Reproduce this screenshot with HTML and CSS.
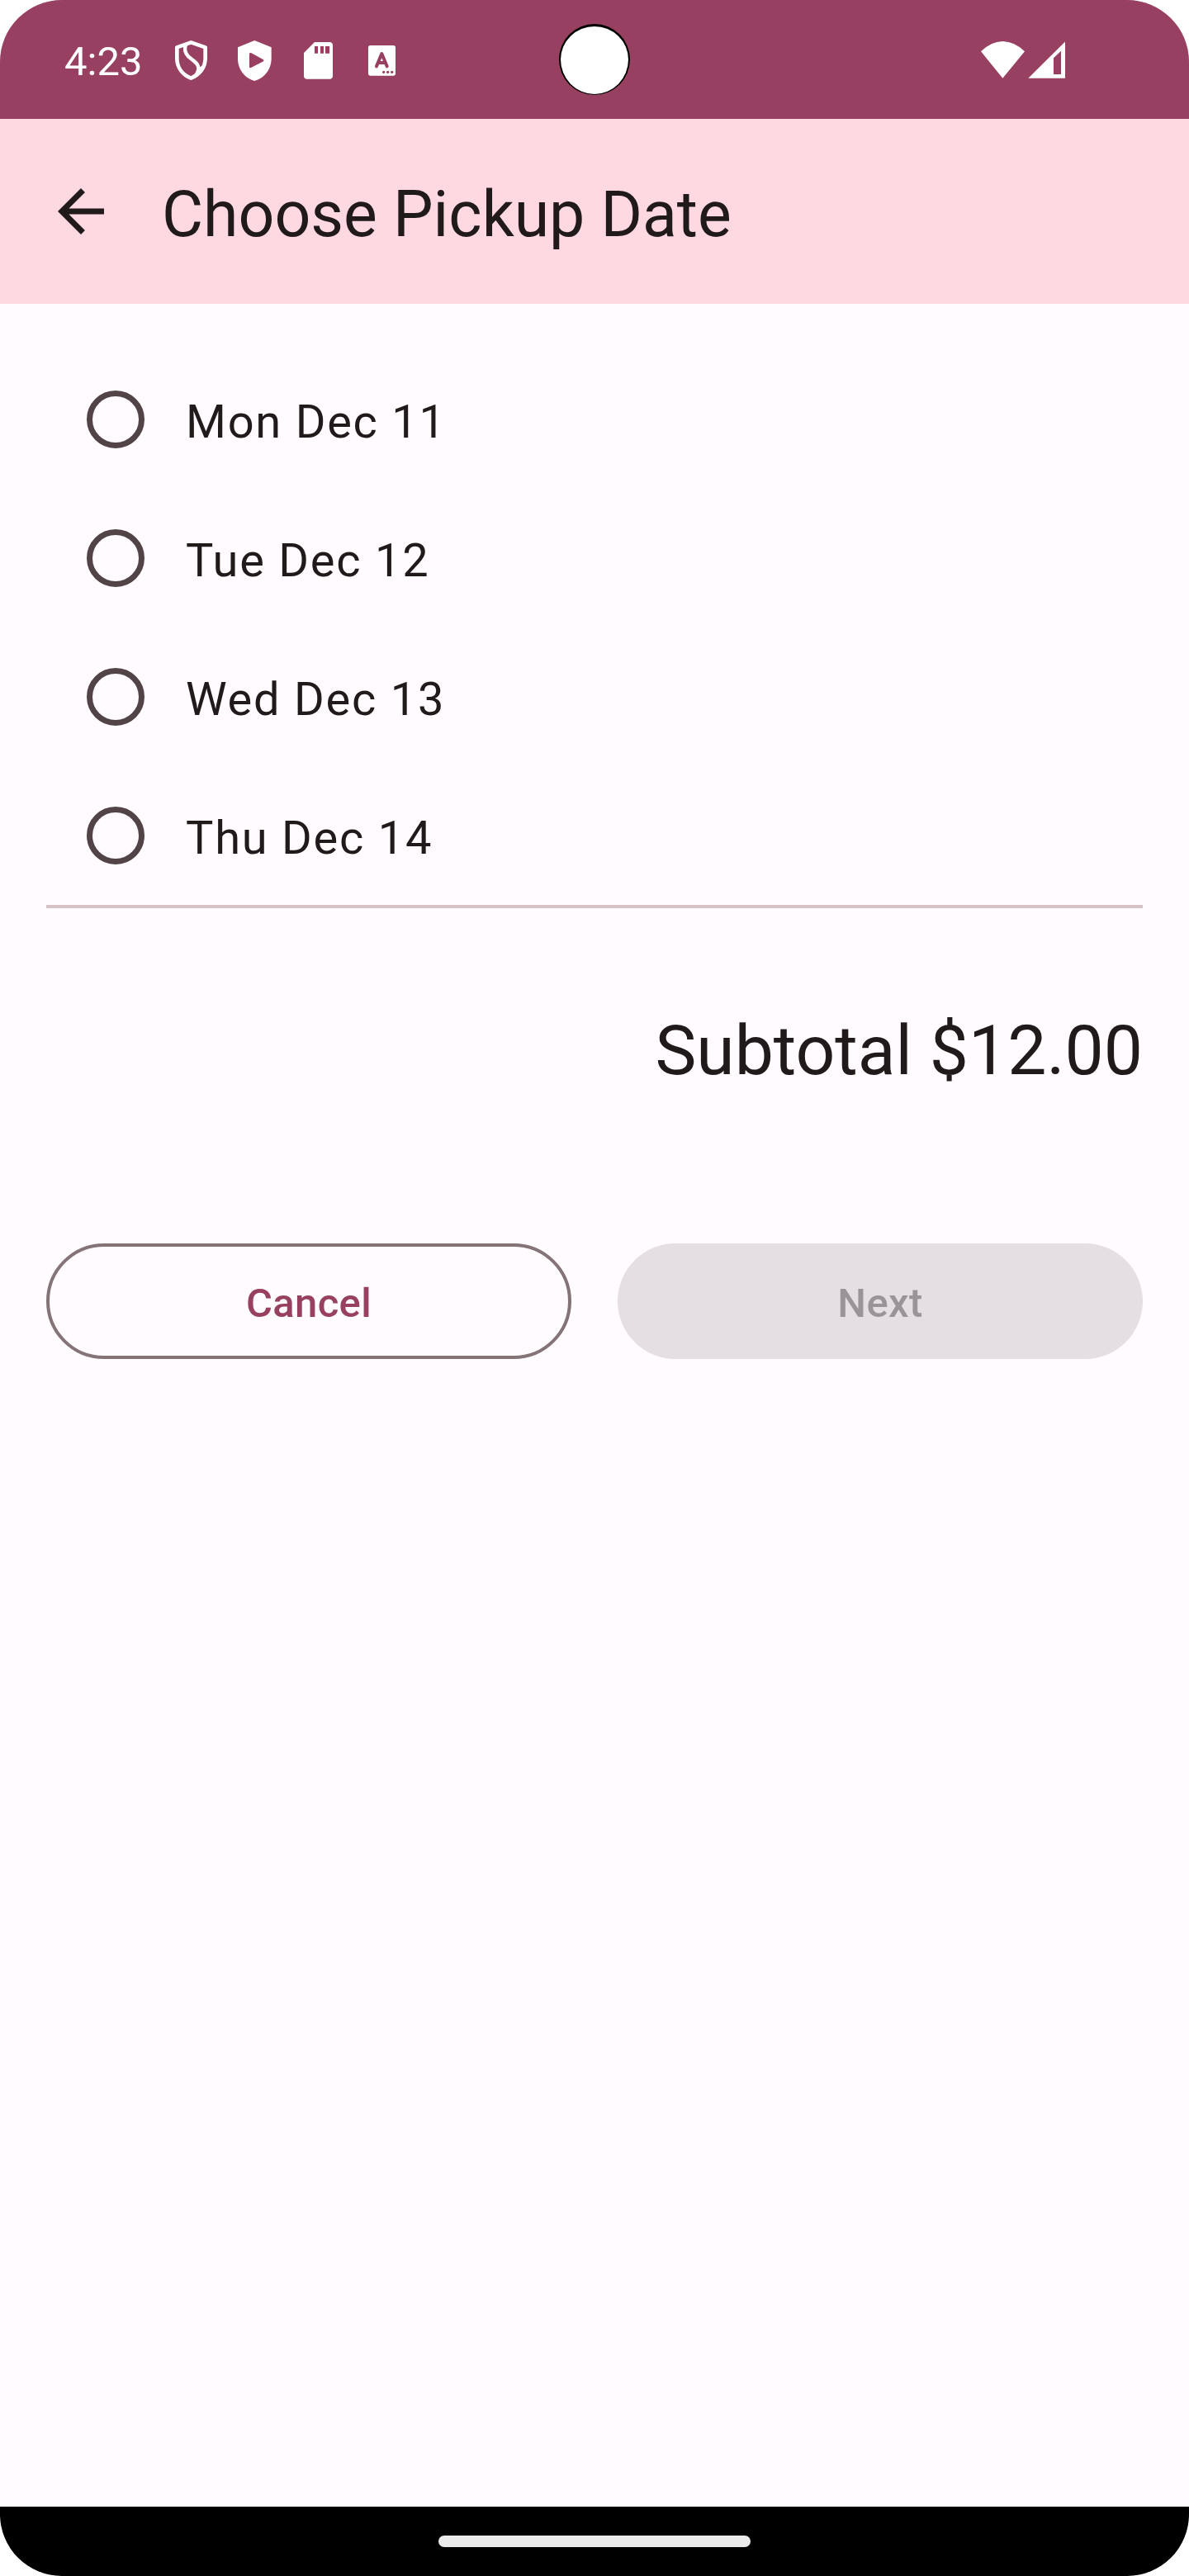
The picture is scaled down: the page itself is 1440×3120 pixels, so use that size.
FILE: index.html
```html
<!DOCTYPE html>
<html lang="en">
<head>
<meta charset="utf-8">
<title>Choose Pickup Date</title>
<link rel="stylesheet" href="styles.css">
</head>
<body>
<div class="device">
  <header class="status-bar">
    <span class="clock">4:23</span>
    <div class="notifications">
      <svg class="note-icon" viewBox="580 120 231 192" aria-hidden="true">
        <g fill="none" stroke="#fff" stroke-width="14" stroke-linejoin="round">
          <path d="M695 154L644 172V212C644 247 666 272 695 284C724 272 747 247 747 212V172Z"/>
          <path d="M676 163C669 181 673 193 686 206L706 222C726 238 727 253 711 276" stroke-width="13"/>
        </g>
        <path d="M727 244L738 237L727 262Z" fill="#fff"/>
      </svg>
      <svg class="note-icon" viewBox="810 120 231 192" aria-hidden="true">
        <path fill="#fff" fill-rule="evenodd" d="M925 147L986 172V213C986 254 958 285 925 294C892 285 864 254 864 213V172ZM906 196V243Q907 248 912 246L957 223Q960 220 957 217L912 192Q907 191 906 196Z"/>
      </svg>
      <svg class="note-icon" viewBox="1041 120 231 192" aria-hidden="true">
        <path fill="#fff" fill-rule="evenodd" d="M1143 153H1198Q1209 154 1209 165V275Q1209 286 1198 287H1115Q1104 286 1104 275V192ZM1143 168V194H1155V168ZM1164 168V194H1176V168ZM1182 168V194H1197V168Z"/>
      </svg>
      <svg class="note-icon" viewBox="1272 120 231 192" aria-hidden="true">
        <rect x="1338" y="165" width="99" height="110" rx="8" fill="#fff"/>
        <path d="M1368 241L1387 195L1406 241M1375 228H1399" fill="none" stroke="#984061" stroke-width="12" stroke-linecap="round" stroke-linejoin="round"/>
        <g fill="#984061"><circle cx="1394" cy="262" r="5"/><circle cx="1409" cy="262" r="5"/><circle cx="1424" cy="262" r="5"/></g>
      </svg>
    </div>
    <svg class="network" viewBox="138 120 315 192" aria-hidden="true">
      <path fill="#fff" d="M144 187Q180 151 223 150Q267 151 303 187L223 284Z"/>
      <path fill="#fff" fill-rule="evenodd" d="M316 284.500L450 151.500V284.500ZM408 211V270H435V185Z"/>
    </svg>
    <span class="camera"></span>
  </header>
  <div class="app-bar">
    <svg class="back" viewBox="0 0 24 24" role="img" aria-label="Back"><path d="M20 11H7.830l5.590-5.590L12 4l-8 8 8 8 1.410-1.410L7.830 13H20z"/></svg>
    <h1 class="title">Choose Pickup Date</h1>
  </div>
  <main class="content">
    <div class="options">
      <label class="option"><input class="radio" type="radio" name="date"><span class="label">Mon Dec 11</span></label>
      <label class="option"><input class="radio" type="radio" name="date"><span class="label">Tue Dec 12</span></label>
      <label class="option"><input class="radio" type="radio" name="date"><span class="label">Wed Dec 13</span></label>
      <label class="option"><input class="radio" type="radio" name="date"><span class="label">Thu Dec 14</span></label>
    </div>
    <p class="subtotal">Subtotal $12.00</p>
    <div class="actions">
      <button class="button outlined" type="button">Cancel</button>
      <button class="button filled" type="button" disabled>Next</button>
    </div>
  </main>
  <footer class="nav-bar"><span class="handle"></span></footer>
</div>
</body>
</html>
```
FILE: styles.css
```css
* {
  box-sizing: border-box;
}

body {
  margin: 0;
  background: #fff;
  font-family: Roboto, sans-serif;
  color: #201a1b;
}

.device {
  display: flex;
  flex-direction: column;
  width: 1440px;
  height: 3120px;
  border-radius: 75px;
  overflow: hidden;
  background: #fffbff;
}

.status-bar {
  position: relative;
  display: flex;
  align-items: center;
  flex: none;
  height: 144px;
  padding: 0 149px 0 78px;
  background: #984061;
}

.clock {
  width: 115.300px;
  padding-top: 5px;
  font-size: 49px;
  line-height: 58px;
  color: #fff;
}

.notifications {
  display: flex;
}

.note-icon {
  display: block;
  width: 77px;
  height: 64px;
}

.network {
  width: 105px;
  height: 64px;
  margin-left: auto;
}

/* Front camera cut-out, laid over the status bar */
.camera {
  position: absolute;
  left: 677px;
  top: 29px;
  width: 86px;
  height: 86px;
  border: solid #000;
  border-width: 3px 2px 1px;
  border-radius: 50%;
  background: #fff;
}

.app-bar {
  display: flex;
  align-items: center;
  flex: none;
  gap: 56px;
  height: 224px;
  padding: 0 56px;
  background: #ffd9e1;
}

.back {
  width: 84px;
  height: 84px;
  fill: #201a1b;
}

.title {
  margin: 0;
  padding-top: 7px;
  font-size: 77px;
  font-weight: 400;
  line-height: 98px;
}

.content {
  flex: 1;
  padding: 56px;
}

.options {
  border-bottom: 4px solid #d6c2c6;
}

.option {
  display: flex;
  align-items: center;
  gap: 50px;
  height: 168px;
  padding-left: 49px;
}

.radio {
  appearance: none;
  width: 70px;
  height: 70px;
  margin: 0;
  border: 7px solid #524347;
  border-radius: 50%;
}

.label {
  padding-top: 6px;
  font-size: 56px;
  line-height: 84px;
  letter-spacing: 1.750px;
}

.subtotal {
  margin: 117px 0 177px;
  font-size: 84px;
  line-height: 112px;
  text-align: right;
}

.actions {
  display: grid;
  grid-template-columns: 1fr 1fr;
  gap: 56px;
}

.button {
  height: 140px;
  padding: 5px 0 0;
  border: 0;
  border-radius: 70px;
  font: 500 49px/70px Roboto, sans-serif;
  letter-spacing: 0.350px;
}

.outlined {
  border: 4px solid #847377;
  background: transparent;
  color: #984061;
}

.filled {
  background: #e4dfe3;
  color: #999498;
}

.nav-bar {
  display: flex;
  align-items: center;
  justify-content: center;
  flex: none;
  height: 84px;
  background: #000;
}

.handle {
  width: 378px;
  height: 14px;
  border-radius: 7px;
  background: #ebebeb;
}
```
